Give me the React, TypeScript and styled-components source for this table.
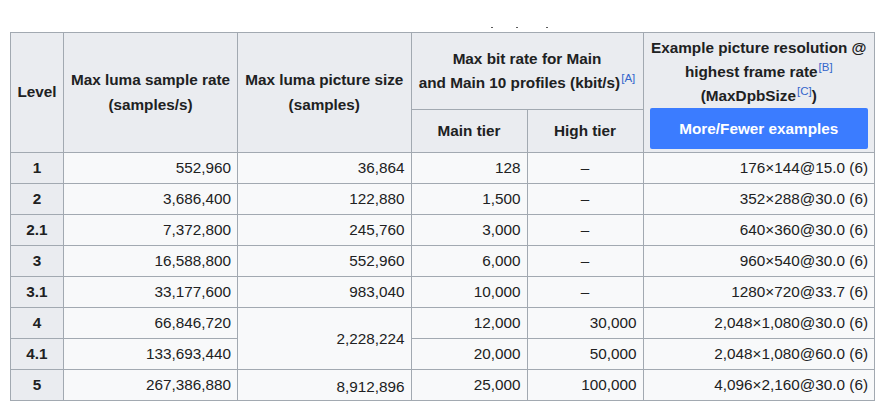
import React from "react";
import styled, { createGlobalStyle } from "styled-components";

const Global = createGlobalStyle`
  html, body { margin: 0; padding: 0; background: #ffffff; }
  body { font-family: "Liberation Sans", Arial, sans-serif; color: #202122; }
`;

const Page = styled.div`
  padding: 0 0 0 10px;
  overflow: hidden;
  height: 401px;
`;

const TopStrip = styled.div`
  height: 32px;
  display: flex;
  align-items: flex-end;
  padding-left: 481px;
  box-sizing: border-box;
  padding-bottom: 4px;
  gap: 0;
`;

const Tick = styled.span<{ $gap: number }>`
  display: block;
  width: 2px;
  height: 1px;
  background: #5a5a5a;
  margin-left: ${(p) => p.$gap}px;
`;

const Table = styled.table`
  border-collapse: collapse;
  table-layout: fixed;
  width: 864px;
  font-size: 15.3px;
  background: #f8f9fa;
  border: 1px solid #a2a9b1;
`;

const HeadCell = styled.th<{ $h?: number }>`
  background: #eaecf0;
  border: 1px solid #a2a9b1;
  padding: 3px 6px;
  line-height: 24.3px;
  font-weight: bold;
  text-align: center;
  vertical-align: middle;
  ${(p) => (p.$h ? `height: ${p.$h}px;` : "")}
`;

const ExampleHead = styled(HeadCell)`
  padding: 3px 6px 3px 6px;
  line-height: 24px;
`;

const LevelCell = styled.th`
  background: #eaecf0;
  border: 1px solid #a2a9b1;
  padding: 3px 6px;
  line-height: 24px;
  height: 24px;
  font-weight: bold;
  text-align: center;
`;

const Cell = styled.td<{ $align?: "right" | "center"; $shift?: boolean }>`
  border: 1px solid #a2a9b1;
  padding: ${(p) => (p.$shift ? "5px 6px 1px" : "3px 6px")};
  line-height: 24px;
  text-align: ${(p) => p.$align ?? "right"};
  vertical-align: middle;
  white-space: nowrap;
`;

const Ref = styled.sup`
  font-size: 11.5px;
  line-height: 1;
  font-weight: normal;
  color: #3366cc;
  vertical-align: 6px;
  margin-left: 1px;
`;

const ToggleButton = styled.button`
  display: block;
  width: 100%;
  height: 41px;
  margin: 0;
  border: none;
  border-radius: 2px;
  background: #3b7cff;
  color: #ffffff;
  font-family: "Liberation Sans", Arial, sans-serif;
  font-size: 15.3px;
  font-weight: bold;
  cursor: pointer;
`;

type Row = {
  level: string;
  rate: string;
  size?: string;
  sizeSpan?: number;
  sizeShift?: boolean;
  main: string;
  high: string;
  example: string;
};

const rows: Row[] = [
  { level: "1", rate: "552,960", size: "36,864", main: "128", high: "–", example: "176×144@15.0 (6)" },
  { level: "2", rate: "3,686,400", size: "122,880", main: "1,500", high: "–", example: "352×288@30.0 (6)" },
  { level: "2.1", rate: "7,372,800", size: "245,760", main: "3,000", high: "–", example: "640×360@30.0 (6)" },
  { level: "3", rate: "16,588,800", size: "552,960", main: "6,000", high: "–", example: "960×540@30.0 (6)" },
  { level: "3.1", rate: "33,177,600", size: "983,040", main: "10,000", high: "–", example: "1280×720@33.7 (6)" },
  { level: "4", rate: "66,846,720", size: "2,228,224", sizeSpan: 2, main: "12,000", high: "30,000", example: "2,048×1,080@30.0 (6)" },
  { level: "4.1", rate: "133,693,440", main: "20,000", high: "50,000", example: "2,048×1,080@60.0 (6)" },
  { level: "5", rate: "267,386,880", size: "8,912,896", sizeShift: true, main: "25,000", high: "100,000", example: "4,096×2,160@30.0 (6)" },
];

export default function App() {
  return (
    <>
      <Global />
      <Page>
        <TopStrip>
          <Tick $gap={0} />
          <Tick $gap={23} />
          <Tick $gap={28} />
        </TopStrip>
        <Table>
          <colgroup>
            <col style={{ width: 53 }} />
            <col style={{ width: 174 }} />
            <col style={{ width: 173.5 }} />
            <col style={{ width: 116 }} />
            <col style={{ width: 116 }} />
            <col style={{ width: 231.5 }} />
          </colgroup>
          <thead>
            <tr>
              <HeadCell rowSpan={2}>Level</HeadCell>
              <HeadCell rowSpan={2}>
                Max luma sample rate
                <br />
                (samples/s)
              </HeadCell>
              <HeadCell rowSpan={2}>
                Max luma picture size
                <br />
                (samples)
              </HeadCell>
              <HeadCell colSpan={2} $h={70}>
                Max bit rate for Main
                <br />
                and Main 10 profiles (kbit/s)<Ref>[A]</Ref>
              </HeadCell>
              <ExampleHead rowSpan={2}>
                Example picture resolution @
                <br />
                highest frame rate<Ref>[B]</Ref>
                <br />
                (MaxDpbSize<Ref>[C]</Ref>)
                <ToggleButton type="button">More/Fewer examples</ToggleButton>
              </ExampleHead>
            </tr>
            <tr>
              <HeadCell>Main tier</HeadCell>
              <HeadCell>High tier</HeadCell>
            </tr>
          </thead>
          <tbody>
            {rows.map((r) => (
              <tr key={r.level}>
                <LevelCell>{r.level}</LevelCell>
                <Cell>{r.rate}</Cell>
                {r.size !== undefined && (
                  <Cell rowSpan={r.sizeSpan} $shift={r.sizeShift}>
                    {r.size}
                  </Cell>
                )}
                <Cell>{r.main}</Cell>
                <Cell $align={r.high === "–" ? "center" : "right"}>{r.high}</Cell>
                <Cell>{r.example}</Cell>
              </tr>
            ))}
          </tbody>
        </Table>
      </Page>
    </>
  );
}
